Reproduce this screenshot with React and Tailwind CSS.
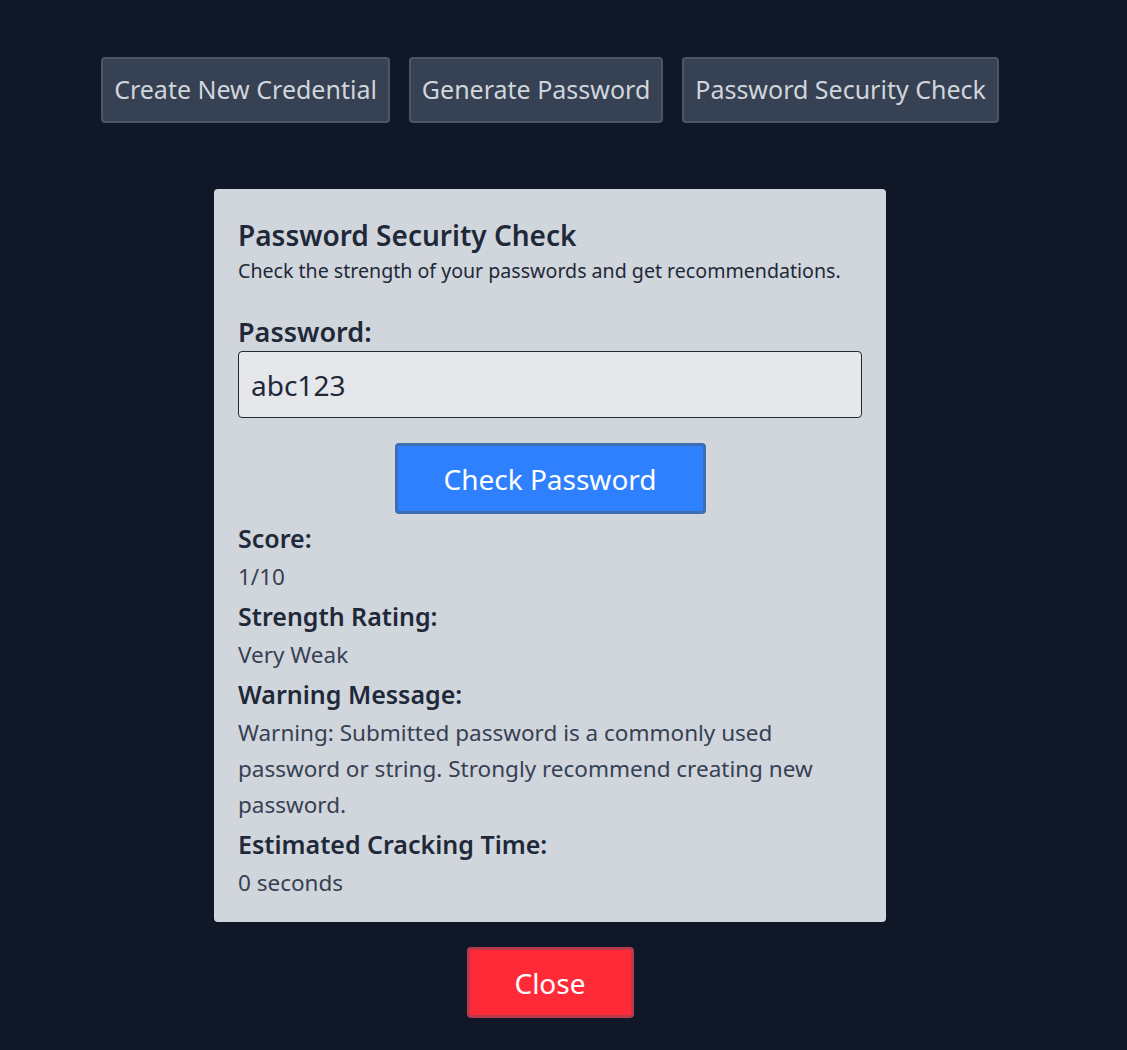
import React, { useState } from 'react';

const font = { fontFamily: '"Segoe UI", "Noto Sans", "Open Sans", sans-serif' };

const TabButton = ({ children }) => (
  <button className="h-[66px] px-[11px] bg-gray-700 border-2 border-gray-600 rounded-[4px] text-[25px] text-gray-300">
    {children}
  </button>
);

const Field = ({ label, children, multi }) => (
  <div>
    <div className="text-[25px] font-semibold text-gray-800 leading-[38px]">{label}</div>
    <div className={multi ? 'text-[22.5px] text-gray-700 leading-[36px] py-[2px]' : 'text-[22.5px] text-gray-700 leading-[40px]'}>
      {children}
    </div>
  </div>
);

export default function App() {
  const [password, setPassword] = useState('abc123');

  return (
    <div className="min-h-[1050px] bg-gray-900" style={font}>
      <div className="w-[1100px] flex flex-col items-center">
        <div className="flex gap-[19px] pt-[57px]">
          <TabButton>Create New Credential</TabButton>
          <TabButton>Generate Password</TabButton>
          <TabButton>Password Security Check</TabButton>
        </div>

        <div className="mt-[66px] w-[672px] bg-gray-300 rounded-[4px] px-6 pt-[28px] pb-[19px]">
          <h2 className="text-[28px] font-semibold text-gray-800 leading-[36px]">Password Security Check</h2>
          <p className="text-[19.6px] text-gray-800 leading-[36px]">
            Check the strength of your passwords and get recommendations.
          </p>

          <label className="block mt-[25px] text-[27px] font-semibold text-gray-800 leading-[36px]">Password:</label>
          <input
            value={password}
            onChange={(e) => setPassword(e.target.value)}
            className="mt-[1px] w-full h-[67px] px-3 bg-gray-200 border border-gray-800 rounded-[4px] text-[28px] text-gray-800 outline-none"
          />

          <div className="flex justify-center mt-[25px]">
            <button className="w-[311px] h-[71px] bg-[#2f80ff] border-[3px] border-[#3d6db3] rounded-[4px] text-[28px] text-white">
              Check Password
            </button>
          </div>

          <div className="mt-[5px]">
            <Field label="Score:">1/10</Field>
            <Field label="Strength Rating:">Very Weak</Field>
            <Field label="Warning Message:" multi>
              Warning: Submitted password is a commonly used password or string. Strongly recommend creating new password.
            </Field>
            <Field label="Estimated Cracking Time:">0 seconds</Field>
          </div>
        </div>

        <button className="mt-[25px] w-[167px] h-[71px] bg-[#ff2a37] border-[3px] border-[#b83a4a] rounded-[4px] text-[28px] text-white">
          Close
        </button>
      </div>
    </div>
  );
}
